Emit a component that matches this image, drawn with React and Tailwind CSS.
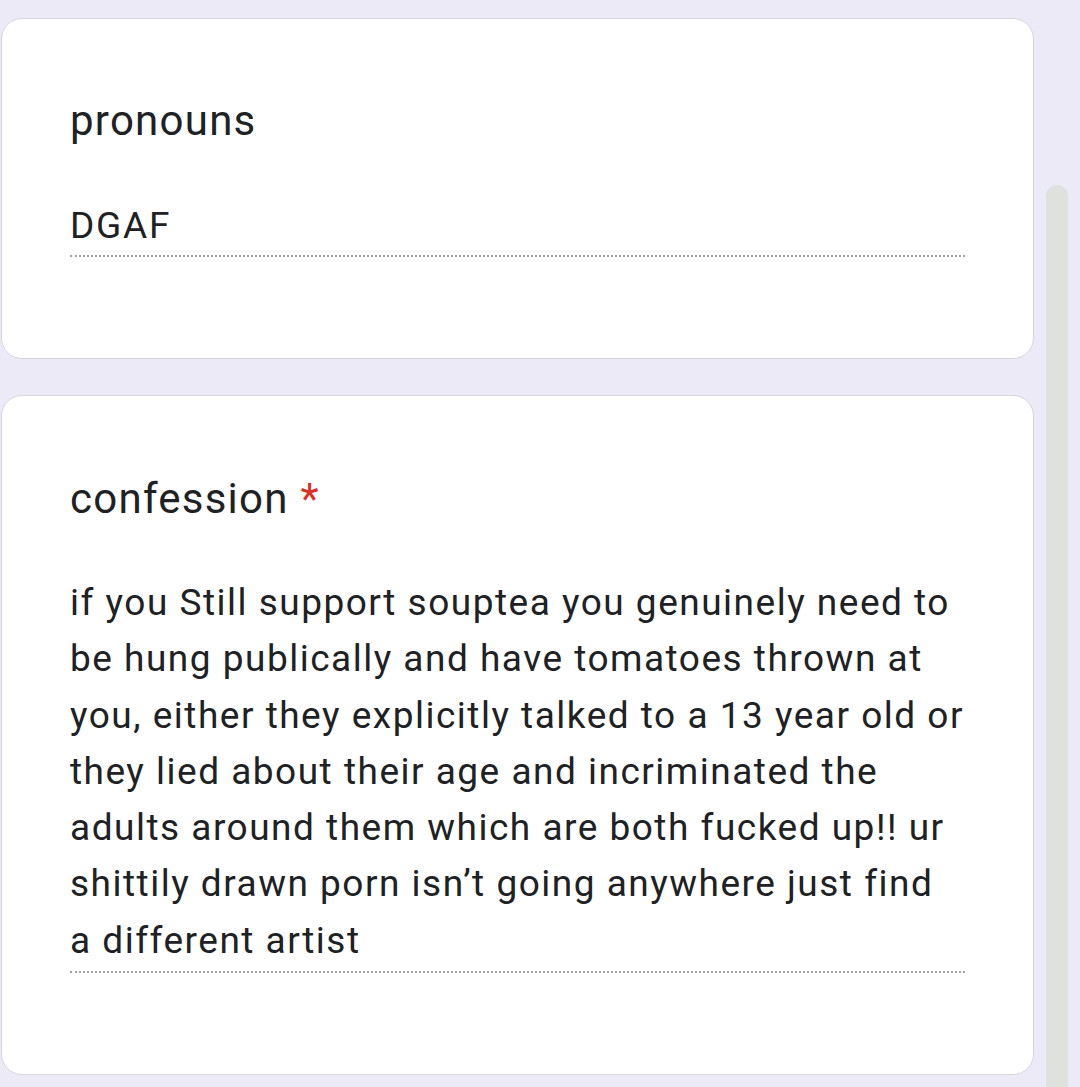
import React from 'react';

const font = { fontFamily: 'Roboto, "Noto Sans", Arial, sans-serif' };

const Card = ({ children, className = '' }) => (
    <div className={`bg-white border border-[#d6d6dc] rounded-[21px] px-[68px] pb-[101px] ${className}`}>
        {children}
    </div>
);

const App = () => {
    return (
        <div className="flex h-[1087px] overflow-hidden bg-[#edeaf8] text-[#202124]" style={font}>
            <div className="w-[1034px] pl-[1px] pt-[18px] flex flex-col gap-[36px]">
                {/* pronouns */}
                <Card className="pt-[74px]">
                    <div className="text-[42px] leading-[56px] tracking-[1.25px]">pronouns</div>
                    <div className="mt-[49px] text-[37px] leading-[56px] tracking-[1.8px] pb-px border-b-2 border-dotted border-[#a3a3a3]">
                        DGAF
                    </div>
                </Card>

                {/* confession */}
                <Card className="pt-[75px]">
                    <div className="text-[42px] leading-[56px] tracking-[1.25px]">
                        confession <span className="text-[#d93025]">*</span>
                    </div>
                    <div className="mt-[48px] text-[37px] leading-[56.3px] tracking-[1.5px] pb-[2px] border-b-2 border-dotted border-[#a3a3a3]">
                        if you Still support souptea you genuinely need to be hung publically and have tomatoes thrown at you, either they explicitly talked to a 13 year old or they lied about their age and incriminated the adults around them which are both fucked up!! ur shittily drawn porn isn’t going anywhere just find a different artist
                    </div>
                </Card>
            </div>

            {/* scrollbar */}
            <div className="flex-1 flex flex-col pl-[12px] pt-[185px]">
                <div className="w-[22px] flex-1 bg-[#dfe1dc] rounded-t-full"></div>
            </div>
        </div>
    );
};

export default App;
